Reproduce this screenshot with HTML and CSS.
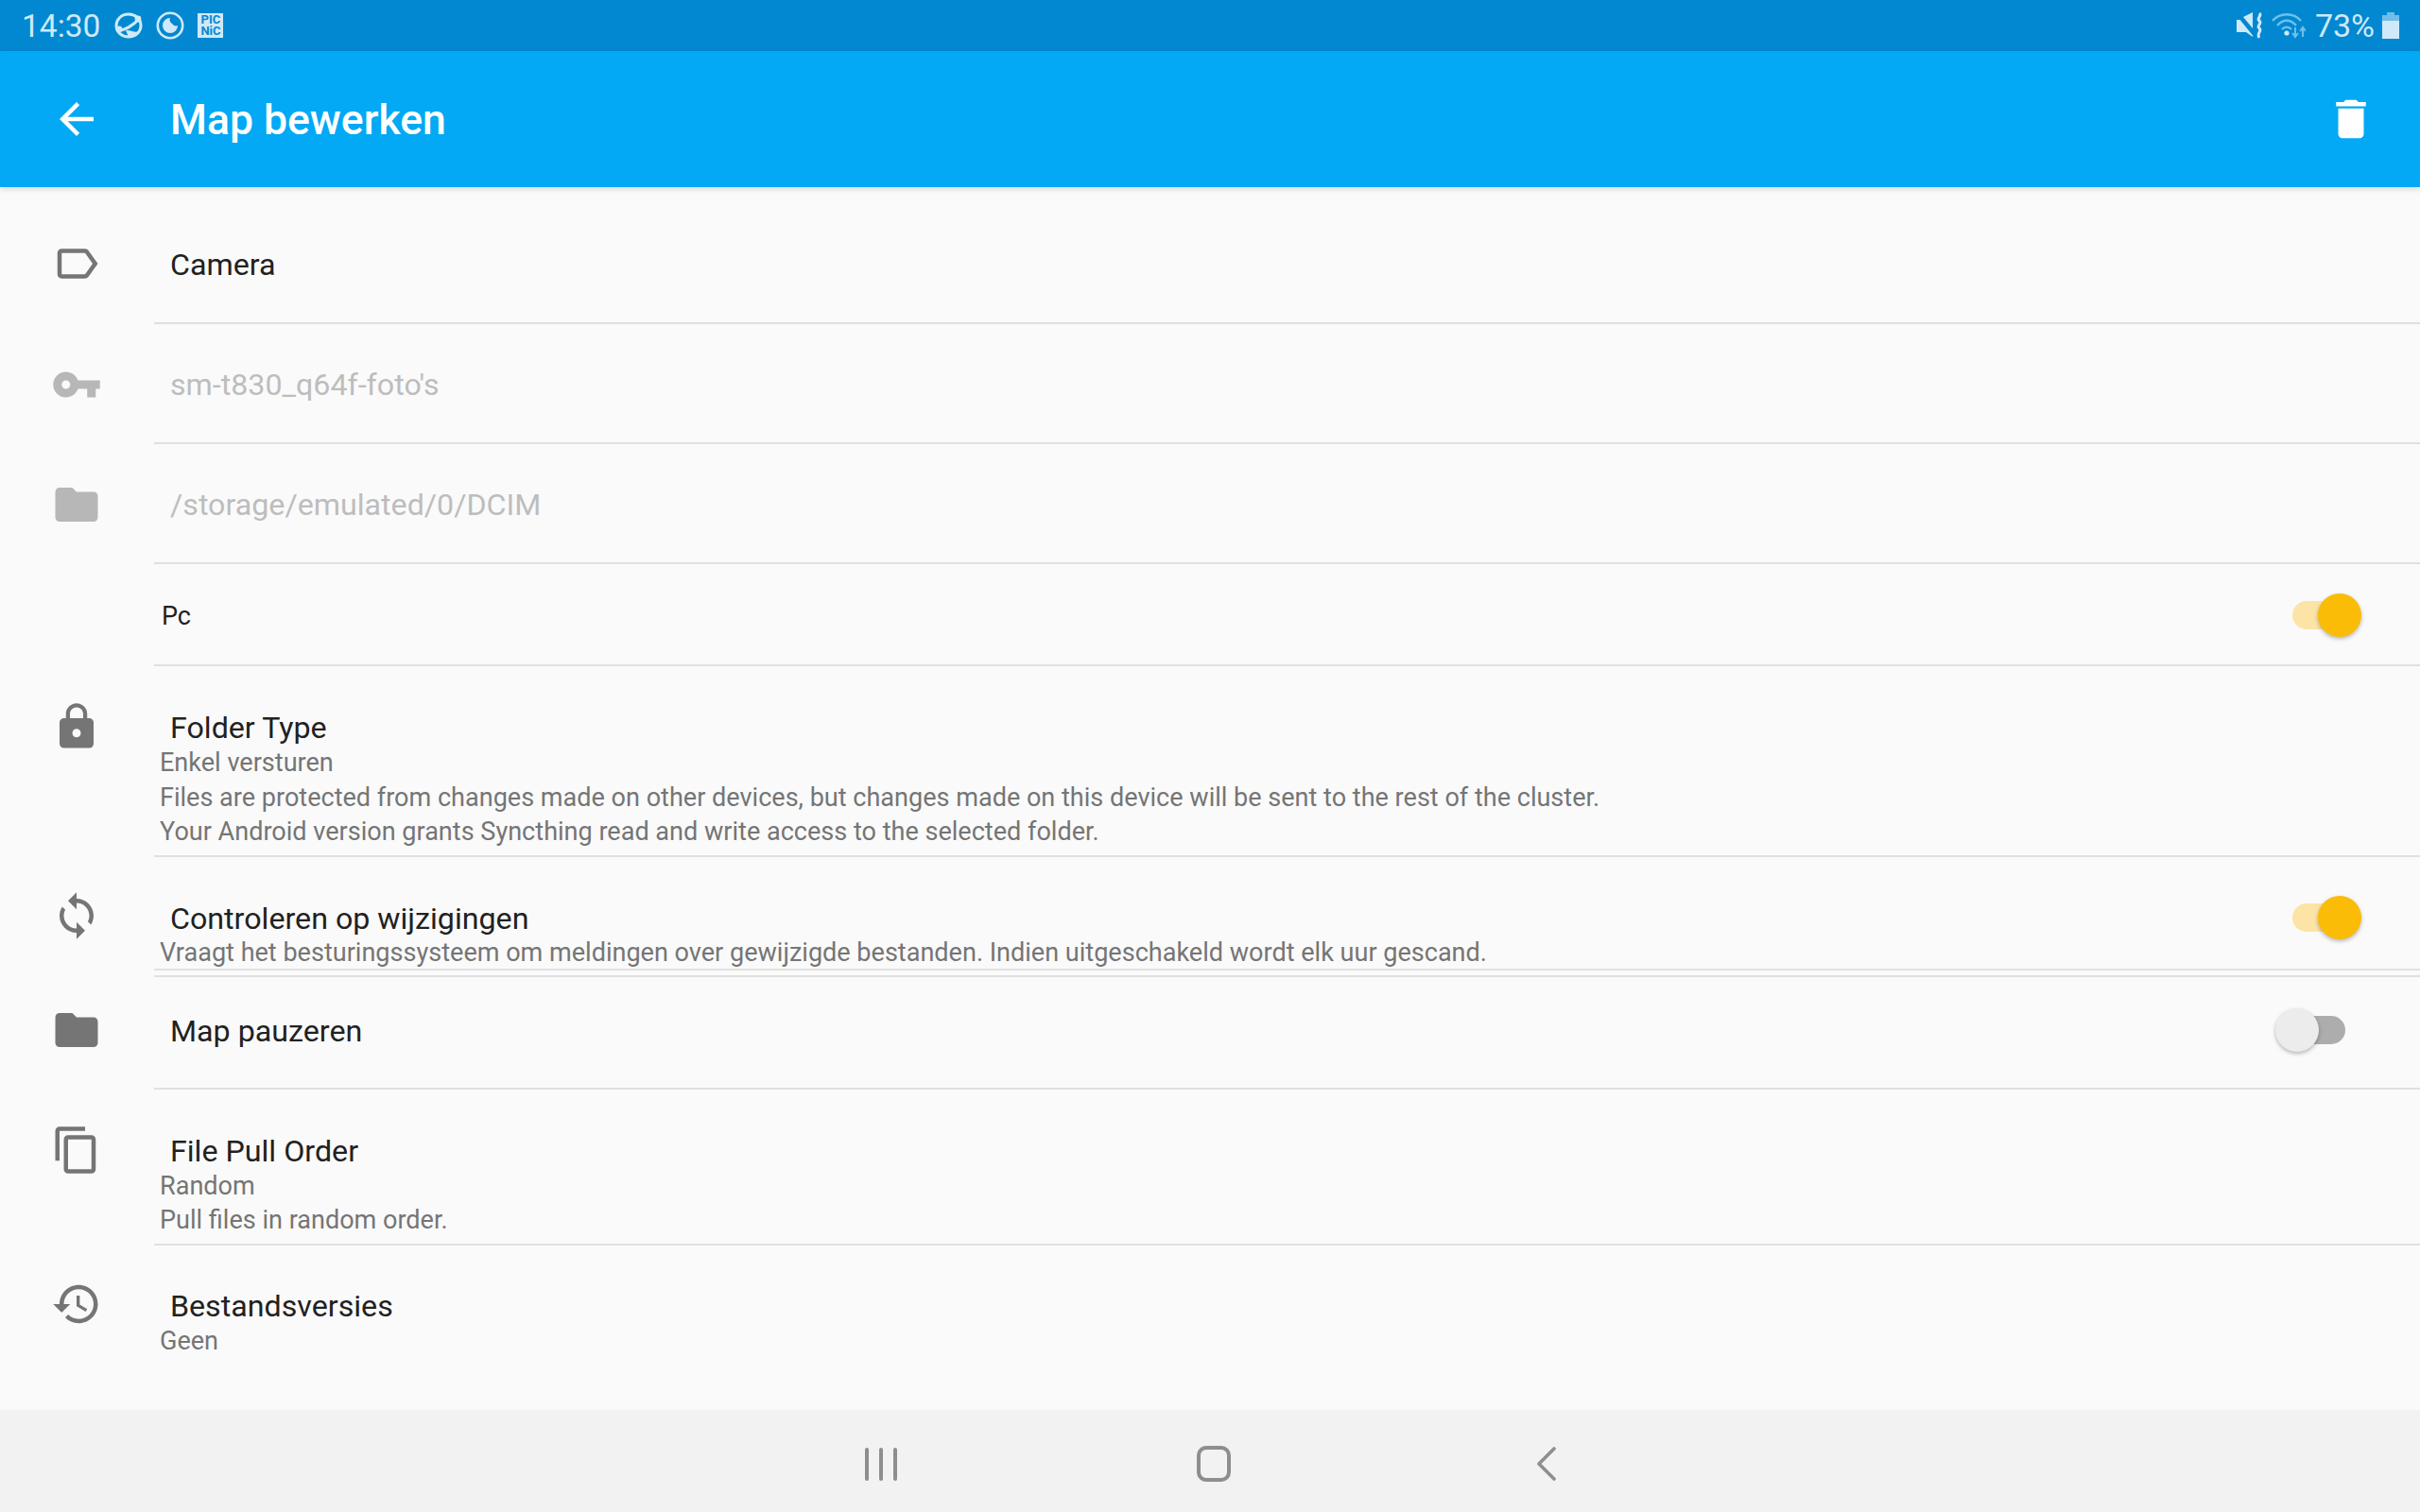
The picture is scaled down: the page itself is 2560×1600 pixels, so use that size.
FILE: index.html
```html
<!DOCTYPE html>
<html lang="nl">
<head>
    <meta charset="UTF-8">
    <meta name="viewport" content="width=device-width, initial-scale=1.0">
    <title>Map bewerken</title>
    <link rel="stylesheet" href="styles.css">
</head>
<body>

<div class="screen">
    <div class="status-bar">
        <span class="clock">14:30</span>
        <svg class="status-icon" width="30" height="28" viewBox="0 0 30 28">
            <path d="M15 2C7 2 2 8 2 14c0 7 6 12 13 12s13-5 13-12c0-7-6-12-13-12z" fill="none" stroke="#cfe9f8" stroke-width="3"/>
            <path d="M3 19 C10 20 20 14 27 6" fill="none" stroke="#cfe9f8" stroke-width="3"/>
            <path d="M12 19 C18 19 22 22 26 20 L21 26 L15 26z" fill="#cfe9f8"/>
            <circle cx="25" cy="7" r="3.4" fill="#cfe9f8"/>
            <circle cx="5" cy="18" r="3.4" fill="#cfe9f8"/>
        </svg>
        <svg class="status-icon" width="30" height="30" viewBox="0 0 30 30">
            <circle cx="15" cy="15" r="13.2" fill="none" stroke="#cfe9f8" stroke-width="2.6"/>
            <path d="M15 7 A8 8 0 1 0 23 15 A5 5 0 0 1 17 13 A5 5 0 0 1 15 7z" fill="#cfe9f8"/>
        </svg>
        <div class="pic-tile"><span>PIC</span><span>NiC</span></div>
        <div class="status-right">
            <svg width="28" height="28" viewBox="0 0 28 28">
                <path d="M0 8h5l12 15v3l-7-5H0zM7 5l10-5v17z" fill="#cfe9f8"/>
                <path d="M0 2l18 22" stroke="#0288d1" stroke-width="2"/>
                <path d="M24 1c3.500 3-3.500 5 0 8s-3.500 5 0 8s-3.500 5 0 10" fill="none" stroke="#cfe9f8" stroke-width="3"/>
            </svg>
            <svg class="wifi" width="36" height="28" viewBox="0 0 36 28">
                <path d="M1 9C9 0 23 0 31 9M6 14C12 7 20 7 26 14M11 18C14 15 18 15 21 18" fill="none" stroke="#6fc0ec" stroke-width="2.4"/>
                <circle cx="16" cy="22" r="2.6" fill="#cfe9f8"/>
                <path d="M25 16v9M22 22l3 4 3-4" fill="none" stroke="#6fc0ec" stroke-width="2"/>
                <path d="M33 26v-9M30 20l3-4 3 4" fill="none" stroke="#6fc0ec" stroke-width="2"/>
            </svg>
            <span class="battery-text">73%</span>
            <div class="battery"><div class="battery-cap"></div><div class="battery-empty"></div><div class="battery-fill"></div></div>
        </div>
    </div>

    <div class="app-bar">
        <svg class="bar-icon" viewBox="0 0 24 24"><path d="M20 11H7.830l5.590-5.590L12 4l-8 8 8 8 1.410-1.410L7.830 13H20v-2z"/></svg>
        <h1 class="bar-title">Map bewerken</h1>
        <svg class="bar-icon" viewBox="0 0 24 24"><path d="M6 19c0 1.100.9 2 2 2h8c1.100 0 2-.9 2-2V7H6v12zM19 4h-3.500l-1-1h-5l-1 1H5v2h14V4z"/></svg>
    </div>

    <div class="content">
        <div class="row first">
            <svg class="row-icon" viewBox="0 0 24 24"><path d="M17.63 5.84C17.27 5.33 16.67 5 16 5L5 5.01C3.9 5.01 3 5.9 3 7v10c0 1.1.9 1.99 2 1.99L16 19c.67 0 1.27-.33 1.63-.84L22 12l-4.37-6.16zM16 17H5V7h11l3.55 5L16 17z"/></svg>
            <div class="row-body single"><div class="title">Camera</div></div>
        </div>
        <div class="row disabled">
            <svg class="row-icon" viewBox="0 0 24 24"><path d="M12.65 10C11.83 7.67 9.61 6 7 6c-3.31 0-6 2.69-6 6s2.69 6 6 6c2.61 0 4.83-1.67 5.65-4H17v4h4v-4h2v-4H12.65zM7 14c-1.1 0-2-.9-2-2s.9-2 2-2 2 .9 2 2-.9 2-2 2z"/></svg>
            <div class="row-body single"><div class="title">sm-t830_q64f-foto's</div></div>
        </div>
        <div class="row disabled">
            <svg class="row-icon" viewBox="0 0 24 24"><path d="M10 4H4c-1.1 0-1.99.9-1.99 2L2 18c0 1.1.9 2 2 2h16c1.1 0 2-.9 2-2V8c0-1.1-.9-2-2-2h-8l-2-2z"/></svg>
            <div class="row-body single"><div class="title">/storage/emulated/0/DCIM</div></div>
        </div>
        <div class="row">
            <div class="icon-spacer"></div>
            <div class="row-body device">
                <div class="device-name">Pc</div>
                <div class="switch on"><div class="thumb"></div></div>
            </div>
        </div>
        <div class="row">
            <svg class="row-icon" viewBox="0 0 24 24"><path d="M18 8h-1V6c0-2.76-2.24-5-5-5S7 3.24 7 6v2H6c-1.1 0-2 .9-2 2v10c0 1.1.9 2 2 2h12c1.1 0 2-.9 2-2V10c0-1.1-.9-2-2-2zm-6 9c-1.1 0-2-.9-2-2s.9-2 2-2 2 .9 2 2-.9 2-2 2zm3.1-9H8.9V6c0-1.71 1.39-3.1 3.1-3.1 1.71 0 3.1 1.39 3.1 3.1v2z"/></svg>
            <div class="row-body">
                <div class="title">Folder Type</div>
                <div class="summary">Enkel versturen</div>
                <div class="summary">Files are protected from changes made on other devices, but changes made on this device will be sent to the rest of the cluster.</div>
                <div class="summary">Your Android version grants Syncthing read and write access to the selected folder.</div>
            </div>
        </div>
        <div class="row gap-after">
            <svg class="row-icon" viewBox="0 0 24 24"><path d="M12 4V1L8 5l4 4V6c3.31 0 6 2.69 6 6 0 1.01-.25 1.97-.7 2.8l1.46 1.46C19.54 15.03 20 13.57 20 12c0-4.42-3.58-8-8-8zm0 14c-3.31 0-6-2.69-6-6 0-1.01.25-1.97.7-2.8L5.24 7.74C4.46 8.97 4 10.43 4 12c0 4.42 3.58 8 8 8v3l4-4-4-4v3z"/></svg>
            <div class="row-body with-switch tight">
                <div class="texts">
                    <div class="title">Controleren op wijzigingen</div>
                    <div class="summary">Vraagt het besturingssysteem om meldingen over gewijzigde bestanden. Indien uitgeschakeld wordt elk uur gescand.</div>
                </div>
                <div class="switch on"><div class="thumb"></div></div>
            </div>
        </div>
        <div class="row pause">
            <svg class="row-icon" viewBox="0 0 24 24"><path d="M10 4H4c-1.1 0-1.99.9-1.99 2L2 18c0 1.1.9 2 2 2h16c1.1 0 2-.9 2-2V8c0-1.1-.9-2-2-2h-8l-2-2z"/></svg>
            <div class="row-body with-switch">
                <div class="texts"><div class="title">Map pauzeren</div></div>
                <div class="switch"><div class="thumb"></div></div>
            </div>
        </div>
        <div class="row">
            <svg class="row-icon" viewBox="0 0 24 24"><path d="M16 1H4c-1.1 0-2 .9-2 2v14h2V3h12V1zm3 4H8c-1.1 0-2 .9-2 2v14c0 1.1.9 2 2 2h11c1.1 0 2-.9 2-2V7c0-1.1-.9-2-2-2zm0 16H8V7h11v14z"/></svg>
            <div class="row-body">
                <div class="title">File Pull Order</div>
                <div class="summary">Random</div>
                <div class="summary">Pull files in random order.</div>
            </div>
        </div>
        <div class="row last">
            <svg class="row-icon" viewBox="0 0 24 24"><path d="M13 3c-4.97 0-9 4.03-9 9H1l3.89 3.89.07.14L9 12H6c0-3.87 3.13-7 7-7s7 3.13 7 7-3.13 7-7 7c-1.93 0-3.68-.79-4.94-2.06l-1.42 1.42C8.27 19.99 10.51 21 13 21c4.97 0 9-4.03 9-9s-4.03-9-9-9zm-1 5v5l4.28 2.54.72-1.21-3.5-2.08V8H12z"/></svg>
            <div class="row-body">
                <div class="title">Bestandsversies</div>
                <div class="summary">Geen</div>
            </div>
        </div>
    </div>

    <div class="nav-bar">
        <div class="nav-item recents"><span></span><span></span><span></span></div>
        <div class="nav-item"><div class="home"></div></div>
        <div class="nav-item">
            <svg width="22" height="36" viewBox="0 0 22 36"><path d="M19 2 L3 18 L19 34" fill="none" stroke="#8e8e8e" stroke-width="3.6" stroke-linecap="round" stroke-linejoin="round"/></svg>
        </div>
    </div>
</div>

</body>
</html>
```

FILE: styles.css
```css
body {
    margin: 0;
    font-family: Roboto, "Liberation Sans", sans-serif;
    background-color: #fafafa;
}
.screen {
    width: 2560px;
    height: 1600px;
    display: flex;
    flex-direction: column;
    overflow: hidden;
}

/* status bar */
.status-bar {
    height: 54px;
    flex: none;
    display: flex;
    align-items: center;
    padding: 0 22px 0 23px;
    background-color: #0288d1;
    color: #cfe9f8;
}
.clock {
    font-size: 33.5px;
    margin-right: 15px;
}
.status-icon {
    margin-right: 14px;
}
.pic-tile {
    width: 27px;
    height: 26px;
    display: flex;
    flex-direction: column;
    align-items: center;
    justify-content: center;
    background-color: #cfe9f8;
    color: #0288d1;
    font-size: 13px;
    font-weight: 700;
    line-height: 12px;
}
.status-right {
    margin-left: auto;
    display: flex;
    align-items: center;
}
.wifi {
    margin-left: 9px;
}
.battery-text {
    font-size: 34px;
    margin-left: 10px;
}
.battery {
    width: 18px;
    height: 28px;
    margin-left: 8px;
    display: flex;
    flex-direction: column;
    align-items: center;
}
.battery-cap {
    width: 8px;
    height: 3px;
    background-color: #6fbde8;
}
.battery-empty {
    width: 100%;
    height: 6px;
    background-color: #6fbde8;
}
.battery-fill {
    width: 100%;
    flex: 1;
    background-color: #cfe9f8;
}

/* app bar */
.app-bar {
    height: 144px;
    flex: none;
    display: flex;
    align-items: center;
    padding: 0 46px 0 54px;
    background-color: #03a9f4;
    color: white;
    box-shadow: 0 2px 6px rgba(0, 0, 0, 0.15);
    position: relative;
}
.bar-icon {
    width: 54px;
    height: 54px;
    fill: white;
    flex: none;
}
.bar-title {
    flex: 1;
    margin: 2px 0 0 72px;
    font-size: 44.500px;
    font-weight: 500;
}

/* settings list */
.content {
    flex: 1;
    padding-top: 17px;
    background-color: #fafafa;
}
.row {
    display: flex;
    align-items: flex-start;
}
.row-icon {
    width: 54px;
    height: 54px;
    flex: none;
    margin: 37px 55px 0 54px;
    fill: #757575;
}
.icon-spacer {
    width: 163px;
    flex: none;
}
.row-body {
    flex: 1;
    padding: 46px 0 6px;
    border-bottom: 2px solid #e0e0e0;
}
.row-body.single {
    padding: 45px 0 42px;
}
.first .row-body.single {
    padding: 46px 0 42px;
}
.title {
    margin-left: 17px;
    font-size: 32.2px;
    line-height: 38px;
    color: #212121;
}
.summary {
    margin-left: 6px;
    font-size: 27.05px;
    line-height: 36.6px;
    color: #757575;
}
.disabled .title {
    color: #bdbdbd;
}
.disabled .row-icon {
    fill: #b7b7b7;
}
.device {
    height: 106px;
    padding: 0;
    display: flex;
    align-items: center;
    justify-content: space-between;
}
.device-name {
    margin: 3px 0 0 8px;
    font-size: 27px;
    color: #212121;
}
.device .switch {
    margin-top: 2px;
}
.with-switch {
    display: flex;
    justify-content: space-between;
    align-items: flex-start;
}
.with-switch .switch {
    margin-top: 3px;
}
.tight {
    padding-bottom: 0;
}
.tight .summary {
    line-height: 34px;
}
.gap-after {
    margin-bottom: 5px;
}
.gap-after .row-icon {
    margin-top: 35px;
}
.pause .row-icon {
    margin-top: 31px;
}
.pause .row-body {
    padding-top: 38px;
    padding-bottom: 41px;
    border-top: 2px solid #e0e0e0;
}
.last .row-icon {
    margin-top: 35px;
}
.last .row-body {
    padding-top: 45px;
    border-bottom: none;
}

/* switches */
.switch {
    position: relative;
    width: 56px;
    height: 30px;
    margin-right: 79px;
    border-radius: 15px;
    background-color: #adadad;
}
.switch.on {
    background-color: #fce4a6;
}
.thumb {
    position: absolute;
    top: -8px;
    left: -18px;
    width: 46px;
    height: 46px;
    border-radius: 50%;
    background-color: #ececec;
    box-shadow: 0 2px 4px rgba(0, 0, 0, 0.28);
}
.switch.on .thumb {
    left: 27px;
    background-color: #fbbc07;
}

/* nav bar */
.nav-bar {
    height: 108px;
    flex: none;
    display: flex;
    justify-content: center;
    align-items: center;
    padding: 6px 0 0 8px;
    box-sizing: border-box;
    background-color: #f2f2f2;
}
.nav-item {
    width: 352px;
    display: flex;
    justify-content: center;
    align-items: center;
}
.recents {
    gap: 11px;
}
.recents span {
    width: 4px;
    height: 35px;
    border-radius: 2px;
    background-color: #8e8e8e;
}
.home {
    width: 28px;
    height: 30px;
    border: 4px solid #8e8e8e;
    border-radius: 10px;
}
```
